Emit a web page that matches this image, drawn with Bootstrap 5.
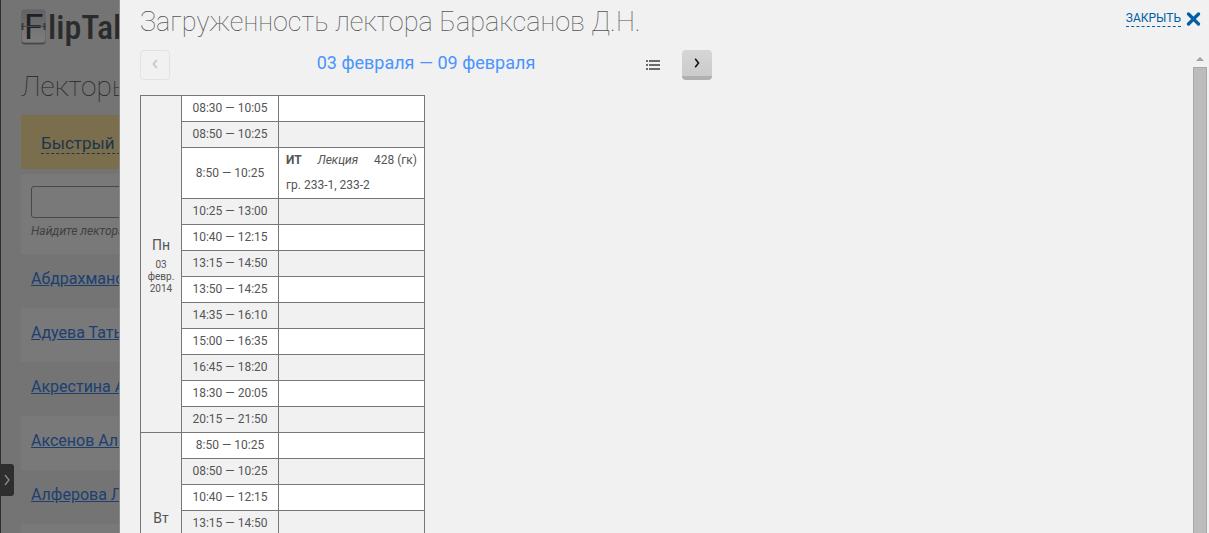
<!DOCTYPE html>
<html lang="ru">
<head>
<meta charset="utf-8">
<meta name="viewport" content="width=device-width, initial-scale=1">
<title>Загруженность лектора</title>
<link href="https://cdn.jsdelivr.net/npm/bootstrap@5.3.0/dist/css/bootstrap.min.css" rel="stylesheet">
<style>
body { font-family: Roboto, "Noto Sans", sans-serif; font-size: 12px; line-height: 25px; color: #555; background: #f1f1f1; }
h1, h2 { font-size: 27px; line-height: 34px; font-weight: 100; margin: 0; white-space: nowrap; }

/* dimmed page behind the panel */
.backpage { width: 120px; flex: none; background: #747474; border-left: 1px solid #2e2e2e; border-right: 1px solid #8c8c8c; padding-left: 20px; white-space: nowrap; }
.brand { height: 36px; margin: 9px 0 25px; gap: 2px; }
.brand-letter { font: 400 35px Roboto, sans-serif; fill: #202020; }
.brand-word { font: 500 34px/36px "Roboto Condensed", "Liberation Sans Narrow", sans-serif; color: #2b2b2b; }
.backpage h2 { font-size: 28px; color: #262626; margin-bottom: 11px; }
.quick { background: #7b6e4c; height: 54px; padding: 18px 20px; margin-bottom: 5px; font-size: 17px; line-height: 20px; }
.quick a { color: #1c3550; text-decoration: none; border-bottom: 1px dashed #1c3550; display: inline-block; }
.finder { background: #797979; height: 80px; padding: 12px 10px 0; }
.finder input { display: block; width: 200px; height: 32px; background: #797979; border: 1px solid #484848; border-radius: 3px; }
.finder label { display: block; font-size: 12px; line-height: 27px; font-style: italic; color: #404040; }
.people li { height: 54px; line-height: 50px; padding-left: 10px; font-size: 16px; }
.people li:nth-child(even) { background: #797979; }
.people a { color: #1c3f70; }
.drawer-tab { left: 0; top: 464px; width: 14px; height: 32px; background: #2e2e2e; border: 0; border-radius: 0 3px 3px 0; padding: 0; }

/* panel */
.panel-head { flex: none; padding: 5px 8px 0 20px; height: 50px; }
.close-btn { height: 27px; gap: 5px; color: #0060a5; font-size: 12px; line-height: 15px; }
.close-btn span { border-bottom: 1px dashed #0060a5; }
.week-nav { display: grid; grid-template-columns: 66px 1fr 66px; max-width: 572px; height: 30px; margin-bottom: 15px; }
.week-name { font-size: 18px; line-height: 26px; color: #4a94ff; }
.step { width: 30px; height: 30px; border-radius: 4px; padding: 0 0 2px; color: #111; }
.step-next { background: linear-gradient(#d6d6d6, #cbcbcb); border: 0; border-bottom: 4px solid #b0b0b0; padding: 0; }
.step-prev { background: transparent; border: 1px solid #e2e2e2; color: #ccc; }
.schedule { width: 285px; table-layout: fixed; border-collapse: collapse; }
.schedule td, .schedule th { border: 1px solid #777; height: 26px; padding: 0; text-align: center; font-weight: 400; vertical-align: middle; }
.schedule .slot td { background: #fff; }
.schedule .slot-alt td { background: #f1f1f1; }
.schedule td.lesson { padding: 0 7px; text-align: left; }
.schedule .dayname { font-size: 14px; line-height: 24px; margin-bottom: 2px; }
.daydate { font-size: 10px; line-height: 12px; }
.track { width: 16px; background: #f1f1f1; }
.thumb { width: 14px; background: #bcbcbc; border: 1px solid #a8a8a8; border-bottom: 0; }
</style>
</head>
<body>
<div class="d-flex vh-100 overflow-hidden position-relative">
  <aside class="backpage overflow-hidden">
    <div class="brand d-flex">
      <svg class="flex-shrink-0" width="25" height="36" viewBox="0 0 25 36">
        <defs><linearGradient id="tile" x1="0" y1="0" x2="0" y2="1"><stop offset="0" stop-color="#626366"/><stop offset=".5" stop-color="#6b6c6f"/><stop offset=".5" stop-color="#747477"/><stop offset="1" stop-color="#7c7c7e"/></linearGradient></defs>
        <rect x=".5" y="1" width="24" height="34.500" rx="3" fill="#4a4a4a"/>
        <rect x=".5" y=".5" width="24" height="33" rx="3" fill="url(#tile)" stroke="#686868"/>
        <text class="brand-letter" x="3" y="30">F</text>
        <path d="M0 17.500H25" stroke="#494949"/>
        <path d="M1.500 14v7M23.500 14v7" stroke="#3d3d3d" stroke-width="2"/>
      </svg>
      <span class="brand-word">lipTab</span>
    </div>
    <h2>Лекторы</h2>
    <div class="quick"><a href="#find">Быстрый поиск</a></div>
    <div class="finder">
      <input type="text" id="find">
      <label for="find">Найдите лектора</label>
    </div>
    <ul class="people list-unstyled mb-0">
      <li><a href="#">Абдрахманов</a></li>
      <li><a href="#">Адуева Татьяна</a></li>
      <li><a href="#">Акрестина А.</a></li>
      <li><a href="#">Аксенов Алексей</a></li>
      <li><a href="#">Алферова Л.</a></li>
      <li></li>
    </ul>
  </aside>
  <button type="button" class="drawer-tab position-absolute d-flex align-items-center justify-content-center" aria-label="Открыть меню">
    <svg width="6" height="12" viewBox="0 0 6 12"><path d="M1 1l4 5-4 5" fill="none" stroke="#8a8a8a" stroke-width="1.300"/></svg>
  </button>

  <main class="d-flex flex-column flex-fill overflow-hidden">
    <header class="panel-head d-flex justify-content-between">
      <h1>Загруженность лектора Бараксанов Д.Н.</h1>
      <button type="button" class="close-btn btn border-0 p-0 d-flex align-items-center">
        <span>ЗАКРЫТЬ</span>
        <svg width="15" height="14" viewBox="0 0 15 14"><path d="M2.500 2l10 10M12.500 2l-10 10" stroke="#0060a5" stroke-width="3.200" stroke-linecap="round"/></svg>
      </button>
    </header>
    <div class="d-flex flex-fill overflow-hidden">
      <div class="flex-fill overflow-hidden px-0 ms-1 ps-3">
        <nav class="week-nav">
          <button type="button" class="step step-prev d-flex align-items-center justify-content-center" disabled aria-label="Предыдущая неделя">
            <svg width="6" height="10" viewBox="0 0 6 10"><path d="M4.800 .8L1.500 5l3.300 4.200" fill="none" stroke="currentColor" stroke-width="2"/></svg>
          </button>
          <div class="week-name text-center">03 февраля — 09 февраля</div>
          <div class="d-flex align-items-center justify-content-between">
            <button type="button" class="btn border-0 p-0 d-flex" aria-label="Список недель">
              <svg width="14" height="10" viewBox="0 0 14 10" fill="#6a6a6a"><path d="M0 0h2v2H0zM3 0h11v2H3zM0 4h2v2H0zM3 4h11v2H3zM0 8h2v2H0zM3 8h11v2H3z"/></svg>
            </button>
            <button type="button" class="step step-next d-flex align-items-center justify-content-center" aria-label="Следующая неделя">
              <svg width="6" height="10" viewBox="0 0 6 10"><path d="M1.200 .8L4.500 5 1.200 9.200" fill="none" stroke="currentColor" stroke-width="1.600"/></svg>
            </button>
          </div>
        </nav>
        <table class="schedule">
          <colgroup><col style="width:41px"><col style="width:97px"><col></colgroup>
          <tbody>
            <tr class="slot"><th scope="rowgroup" rowspan="12"><div class="dayname">Пн</div><div class="daydate px-1">03 февр. 2014</div></th><td>08:30 — 10:05</td><td></td></tr>
            <tr class="slot-alt"><td>08:50 — 10:25</td><td></td></tr>
            <tr class="slot"><td>8:50 — 10:25</td><td class="lesson"><div class="d-flex justify-content-between"><b>ИТ</b><i>Лекция</i><span>428 (гк)</span></div><div>гр. 233-1, 233-2</div></td></tr>
            <tr class="slot-alt"><td>10:25 — 13:00</td><td></td></tr>
            <tr class="slot"><td>10:40 — 12:15</td><td></td></tr>
            <tr class="slot-alt"><td>13:15 — 14:50</td><td></td></tr>
            <tr class="slot"><td>13:50 — 14:25</td><td></td></tr>
            <tr class="slot-alt"><td>14:35 — 16:10</td><td></td></tr>
            <tr class="slot"><td>15:00 — 16:35</td><td></td></tr>
            <tr class="slot-alt"><td>16:45 — 18:20</td><td></td></tr>
            <tr class="slot"><td>18:30 — 20:05</td><td></td></tr>
            <tr class="slot-alt"><td>20:15 — 21:50</td><td></td></tr>
          </tbody>
          <tbody>
            <tr class="slot"><th scope="rowgroup" rowspan="8"><div class="dayname">Вт</div><div class="daydate px-1">04 февр. 2014</div></th><td>8:50 — 10:25</td><td></td></tr>
            <tr class="slot-alt"><td>08:50 — 10:25</td><td></td></tr>
            <tr class="slot"><td>10:40 — 12:15</td><td></td></tr>
            <tr class="slot-alt"><td>13:15 — 14:50</td><td></td></tr>
            <tr class="slot"><td>15:00 — 16:35</td><td></td></tr>
            <tr class="slot-alt"><td>16:45 — 18:20</td><td></td></tr>
            <tr class="slot"><td>18:30 — 20:05</td><td></td></tr>
            <tr class="slot-alt"><td>20:15 — 21:50</td><td></td></tr>
          </tbody>
        </table>
      </div>
      <div class="track d-flex flex-column flex-shrink-0 align-items-start" aria-hidden="true">
        <svg width="14" height="17" viewBox="0 0 14 17"><path d="M3 11l4-4 4 4z" fill="#a3a3a3"/></svg>
        <div class="thumb flex-fill"></div>
      </div>
    </div>
  </main>
</div>
<script src="https://cdn.jsdelivr.net/npm/bootstrap@5.3.0/dist/js/bootstrap.bundle.min.js"></script>
</body>
</html>
